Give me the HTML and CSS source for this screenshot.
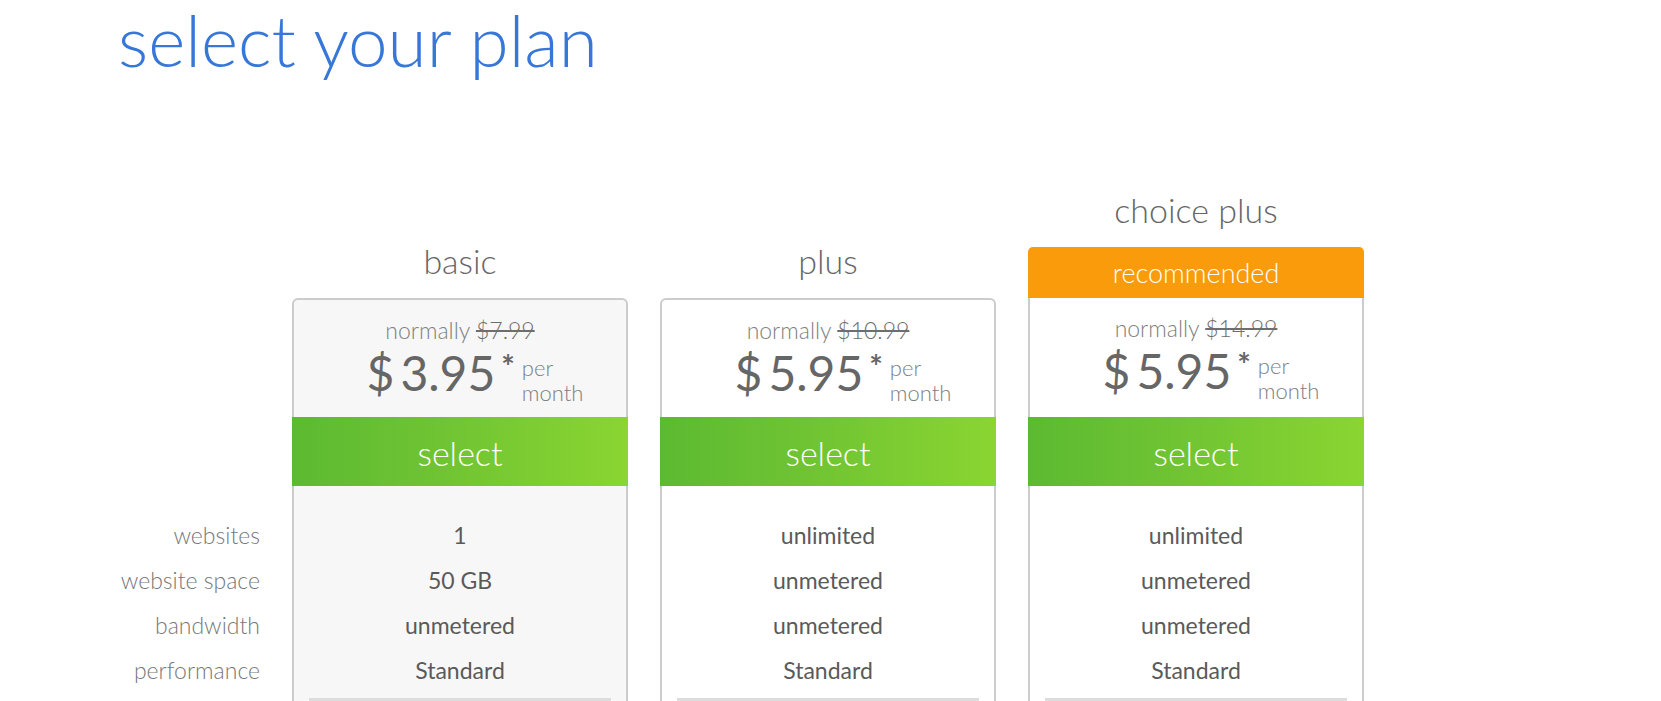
FILE: index.html
```html
<!DOCTYPE html>
<html lang="en">
<head>
<meta charset="utf-8">
<title>select your plan</title>
<link rel="stylesheet" href="styles.css">
</head>
<body>
<div class="page">
  <h1 class="title">select your plan</h1>
  <div class="plans">
    <div class="head"></div>
    <div class="head"><div class="plan-name">basic</div></div>
    <div class="head"><div class="plan-name">plus</div></div>
    <div class="head"><div class="plan-name">choice plus</div><div class="badge">recommended</div></div>

    <div class="spacer"></div>
    <div class="card-top card-basic">
      <div class="normally">normally <s>$7.99</s></div>
      <div class="price"><span class="cur">$</span><span class="amount">3.95</span><span class="star">*</span><span class="per">per<br>month</span></div>
      <div class="select">select</div>
    </div>
    <div class="card-top">
      <div class="normally">normally <s>$10.99</s></div>
      <div class="price"><span class="cur">$</span><span class="amount">5.95</span><span class="star">*</span><span class="per">per<br>month</span></div>
      <div class="select">select</div>
    </div>
    <div class="card-top card-recommended">
      <div class="normally">normally <s>$14.99</s></div>
      <div class="price"><span class="cur">$</span><span class="amount">5.95</span><span class="star">*</span><span class="per">per<br>month</span></div>
      <div class="select">select</div>
    </div>

    <div class="labels">
      <div class="row">websites</div>
      <div class="row">website space</div>
      <div class="row">bandwidth</div>
      <div class="row">performance</div>
    </div>
    <div class="features card-basic">
      <div class="row">1</div>
      <div class="row">50 GB</div>
      <div class="row">unmetered</div>
      <div class="row">Standard</div>
      <div class="divider"></div>
    </div>
    <div class="features">
      <div class="row">unlimited</div>
      <div class="row">unmetered</div>
      <div class="row">unmetered</div>
      <div class="row">Standard</div>
      <div class="divider"></div>
    </div>
    <div class="features">
      <div class="row">unlimited</div>
      <div class="row">unmetered</div>
      <div class="row">unmetered</div>
      <div class="row">Standard</div>
      <div class="divider"></div>
    </div>
  </div>
</div>
</body>
</html>
```

FILE: styles.css
```css
html, body {
  margin: 0;
  padding: 0;
  background: #ffffff;
}

body {
  font-family: Lato, "Open Sans", "Liberation Sans", sans-serif;
  color: #666666;
}

.page {
  padding-left: 118px;
}

.title {
  margin: 0;
  padding-top: 4px;
  font-size: 71px;
  line-height: 72px;
  font-weight: 300;
  color: #3677d8;
}

.plans {
  margin-top: 114px;
  display: grid;
  grid-template-columns: 142px repeat(3, 336px);
  column-gap: 32px;
}

.head {
  align-self: end;
  text-align: center;
}

.plan-name {
  font-size: 34px;
  line-height: 40px;
  font-weight: 300;
  color: #666666;
  margin-bottom: 17px;
}

.badge {
  height: 51px;
  line-height: 51px;
  background: #f99b0b;
  color: #ffffff;
  font-size: 27px;
  font-weight: 300;
  border-radius: 5px 5px 0 0;
}

.card-top {
  display: flex;
  flex-direction: column;
  border: 2px solid #cccccc;
  border-bottom: 0;
  border-radius: 6px 6px 0 0;
  padding-top: 16px;
  background: #ffffff;
}

.card-top.card-recommended {
  border-top: 0;
  border-radius: 0;
}

.card-basic {
  background: #f7f7f7;
}

.card-top.card-basic {
  background: #f7f7f7;
}

.normally {
  text-align: center;
  font-size: 23px;
  line-height: 28px;
  font-weight: 300;
  color: #808080;
}

.normally s {
  color: #6e6e6e;
  text-decoration-thickness: 2px;
}

.price {
  display: flex;
  justify-content: center;
  align-items: flex-start;
  margin-top: 5px;
  padding-left: 30px;
  padding-bottom: 12px;
  color: #666666;
}

.cur,
.amount {
  font-size: 48px;
  line-height: 48px;
  font-weight: 400;
}

.cur {
  margin-right: 6px;
}

.star {
  font-size: 32px;
  line-height: 32px;
  margin-top: 2px;
  margin-left: 6px;
  font-weight: 700;
}

.per {
  font-size: 22px;
  line-height: 25px;
  font-weight: 300;
  color: #808080;
  margin-top: 6px;
  margin-left: 7px;
  text-align: left;
}

.select {
  margin: auto -2px 0;
  height: 69px;
  line-height: 72px;
  text-align: center;
  color: #ffffff;
  font-size: 34px;
  font-weight: 300;
  background: linear-gradient(to right, #5cba31 0%, #70c433 45%, #8ad531 100%);
  cursor: pointer;
}

.labels {
  padding-top: 27px;
}

.labels .row {
  text-align: right;
  white-space: nowrap;
  font-size: 23px;
  line-height: 45px;
  font-weight: 300;
  color: #777777;
}

.features {
  border-left: 2px solid #cccccc;
  border-right: 2px solid #cccccc;
  padding-top: 27px;
  padding-bottom: 30px;
  background: #ffffff;
}

.features.card-basic {
  background: #f7f7f7;
}

.features .row {
  text-align: center;
  font-size: 23px;
  line-height: 45px;
  font-weight: 400;
  color: #5a5a5a;
}

.divider {
  margin: 5px 15px 0;
  height: 3px;
  background: #dddddd;
}
```
